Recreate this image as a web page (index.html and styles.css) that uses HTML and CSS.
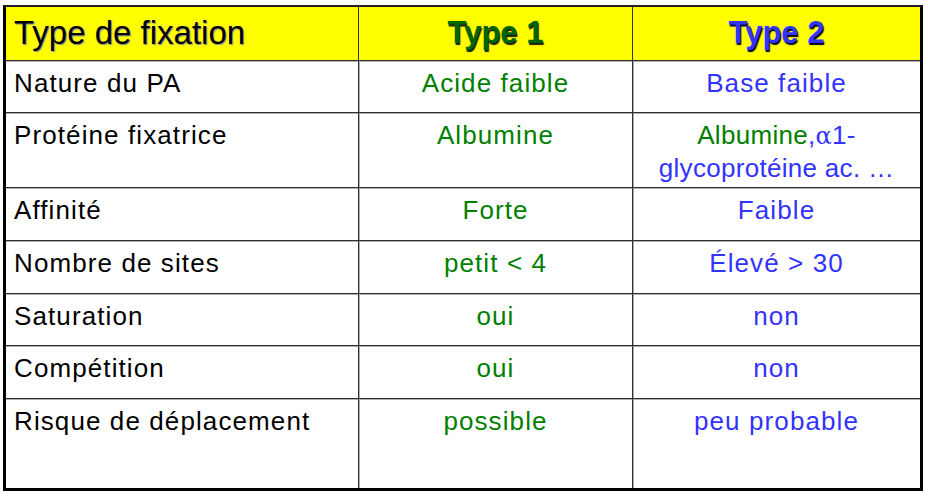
FILE: index.html
```html
<!DOCTYPE html>
<html lang="fr">
<head>
<meta charset="utf-8">
<title>Type de fixation</title>
<link rel="stylesheet" href="styles.css">
</head>
<body>
<div class="table">
  <div class="cell head c1">Type de fixation</div>
  <div class="cell head c2 green-h">Type 1</div>
  <div class="cell head c3 blue-h">Type 2</div>

  <div class="cell c1">Nature du PA</div>
  <div class="cell c2 green">Acide faible</div>
  <div class="cell c3 blue">Base faible</div>

  <div class="cell c1">Protéine fixatrice</div>
  <div class="cell c2 green">Albumine</div>
  <div class="cell c3 blue tight"><span class="green">Albumine</span>,<span class="alpha">α</span>1-<br>glycoprotéine ac. …</div>

  <div class="cell c1">Affinité</div>
  <div class="cell c2 green">Forte</div>
  <div class="cell c3 blue">Faible</div>

  <div class="cell c1">Nombre de sites</div>
  <div class="cell c2 green">petit &lt; 4</div>
  <div class="cell c3 blue">Élevé &gt; 30</div>

  <div class="cell c1">Saturation</div>
  <div class="cell c2 green">oui</div>
  <div class="cell c3 blue">non</div>

  <div class="cell c1">Compétition</div>
  <div class="cell c2 green">oui</div>
  <div class="cell c3 blue">non</div>

  <div class="cell c1 last">Risque de déplacement</div>
  <div class="cell c2 green last">possible</div>
  <div class="cell c3 blue last">peu probable</div>
</div>
</body>
</html>
```

FILE: styles.css
```css
html, body {
  margin: 0;
  padding: 0;
  background: #ffffff;
}

body {
  padding: 5px 0 0 3px;
  font-family: "Liberation Sans", Arial, sans-serif;
}

.table {
  width: 914px;
  display: grid;
  grid-template-columns: 353px 274px 287px;
  grid-template-rows: 54px 52px 75px 53px 53px 52px 53px 89px;
  border-left: 3px solid #000;
  border-top: 2px solid #222;
  border-right: 3px solid #000;
  border-bottom: 3px solid #000;
}

.cell {
  box-sizing: border-box;
  border-bottom: 1px solid #2e2e2e;
  font-size: 26px;
  line-height: 32px;
  letter-spacing: 1.1px;
  padding-top: 6px;
  color: #000;
  box-shadow: inset 0 1px 0 #b0b0b0;
}

.cell.c1,
.cell.c2 {
  border-right: 1px solid #2e2e2e;
}

.cell.c2,
.cell.c3 {
  text-align: center;
  box-shadow: inset 1px 1px 0 #b0b0b0;
}

.cell.c1 {
  padding-left: 8px;
}

.cell.tight {
  letter-spacing: 0.3px;
}

.cell.last {
  border-bottom: none;
}

.head {
  background: #ffff00;
  font-size: 33px;
  line-height: 38px;
  letter-spacing: 0;
  padding-top: 7px;
  text-shadow: 1px 1px 1px #888;
}

.cell.head,
.cell.head.c2,
.cell.head.c3 {
  box-shadow: none;
}

.green-h {
  color: #006600;
  font-weight: bold;
  font-size: 31px;
  text-shadow: 1px 2px 1px #1a1a1a;
}

.blue-h {
  color: #3333ff;
  font-weight: bold;
  font-size: 31px;
  text-shadow: 1px 2px 1px #000033;
}

.green {
  color: #008000;
}

.blue {
  color: #3333ff;
}

.alpha {
  font-family: "DejaVu Serif", "Liberation Serif", serif;
  font-size: 24px;
}
```
